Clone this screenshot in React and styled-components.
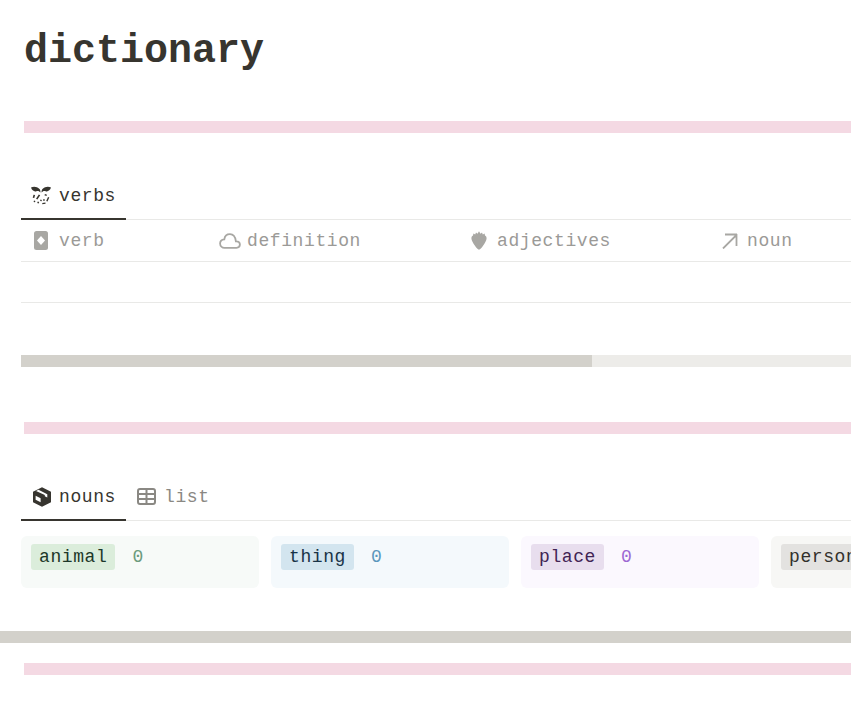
import React from "react";
import styled, { createGlobalStyle } from "styled-components";

const col_text = "#37352f";
const col_muted = "#9b9a97";
const col_icon = "#a8a7a3";
const col_line = "#e9e9e7";
const col_pink = "#f4d9e3";
const col_thumb = "#d3d1cb";
const col_track = "#edece9";

const GlobalStyle = createGlobalStyle`
  html, body {
    margin: 0;
    padding: 0;
    background: #fff;
    overflow: hidden;
  }
  body {
    font-family: "Liberation Mono", "DejaVu Sans Mono", monospace;
    color: ${col_text};
  }
`;

const Page = styled.div`
  width: 851px;
  height: 717px;
  overflow: hidden;
`;

const Title = styled.h1`
  margin: 0;
  padding: 29px 0 0 24px;
  height: 121px;
  box-sizing: border-box;
  font-size: 40px;
  line-height: 46px;
  font-weight: 700;
  white-space: nowrap;
`;

const Divider = styled.div`
  height: 12px;
  margin-left: 24px;
  background: ${col_pink};
`;

const Section = styled.section`
  padding: 42px 0 0 21px;
  height: ${(p) => p.$height}px;
  box-sizing: border-box;
`;

const Tabs = styled.div`
  display: flex;
  height: 45px;
  box-sizing: border-box;
  border-bottom: 1px solid ${col_line};
`;

const Tab = styled.div`
  display: flex;
  align-items: center;
  gap: ${(p) => p.$gap}px;
  height: 45px;
  box-sizing: border-box;
  padding: 0 0 2px ${(p) => p.$left}px;
  width: ${(p) => (p.$active ? "105px" : "auto")};
  border-bottom: 2px solid ${(p) => (p.$active ? col_text : "transparent")};
  color: ${(p) => (p.$active ? col_text : "#8a8883")};
  font-size: 18px;
  letter-spacing: 0.6px;
  white-space: nowrap;
`;

const HeaderRow = styled.div`
  display: grid;
  grid-template-columns: 188px 251px 251px 251px;
  height: 42px;
  box-sizing: border-box;
  border-bottom: 1px solid ${col_line};
`;

const HeaderCell = styled.div`
  display: flex;
  align-items: center;
  gap: ${(p) => p.$gap}px;
  padding-left: ${(p) => p.$left}px;
  color: ${col_muted};
  font-size: 18px;
  letter-spacing: 0.6px;
  white-space: nowrap;
`;

const EmptyRow = styled.div`
  height: 41px;
  box-sizing: border-box;
  border-bottom: 1px solid ${col_line};
`;

const ScrollTrack = styled.div`
  margin-top: 52px;
  height: 12px;
  background: ${col_track};
`;

const ScrollThumb = styled.div`
  width: 571px;
  height: 100%;
  background: ${col_thumb};
`;

const Board = styled.div`
  display: grid;
  grid-template-columns: repeat(4, 238px);
  gap: 12px;
  margin-top: 15px;
`;

const Card = styled.div`
  display: flex;
  align-items: flex-start;
  gap: 17px;
  height: 52px;
  box-sizing: border-box;
  padding: 8px 10px;
  border-radius: 6px;
  background: ${(p) => p.$bg};
`;

const Tag = styled.span`
  height: 26px;
  line-height: 26px;
  padding: 0 8px;
  border-radius: 3px;
  background: ${(p) => p.$bg};
  color: ${(p) => p.$color};
  font-size: 18px;
  letter-spacing: 0.6px;
  white-space: nowrap;
`;

const Count = styled.span`
  line-height: 26px;
  color: ${(p) => p.$color};
  font-size: 18px;
  letter-spacing: 0.6px;
`;

const PageScrollbar = styled.div`
  height: 12px;
  background: ${col_thumb};
`;

const LastDivider = styled(Divider)`
  margin-top: 20px;
`;

const Icon = styled.svg`
  flex: none;
  display: block;
`;

const FlutterIcon = () => (
  <Icon width="22" height="20" viewBox="0 0 22 20" fill={col_text}>
    <path d="M1 1.500c2.500-1.200 6-1 8.500 1.500.6.700.9 1.600 1 3.500-1.200-1.600-2.600-1.900-4.200-1.300C4.200 5.900 2 4.500 1 1.500z" />
    <path d="M21 1.500c-2.500-1.200-6-1-8.500 1.500-.6.700-.9 1.600-1 3.500 1.200-1.600 2.600-1.900 4.200-1.300C17.800 5.900 20 4.500 21 1.500z" />
    <path d="M8.800 8.500l1.400.8-2.800 4.200-1.400-.8zM3.500 8.800l1.600.3-.8 3-1.600-.3zM15 8l2 .8-.6 1.300-2-.8zM18 11l1.300.6-1.800 4-1.300-.6zM13.500 13l1.400.5-.5 1.400-1.400-.5zM10.500 13.500l1.400.4-.4 1.400-1.400-.4zM7.800 15.500l1.400.6-.6 1.400-1.400-.6zM4 14.500l1.400.4-.4 1.400-1.400-.4zM12.200 17l3.200-.6.2 1.300-3.200.6z" />
  </Icon>
);

const VerbIcon = () => (
  <Icon width="14" height="19" viewBox="0 0 14 19">
    <rect width="14" height="19" rx="2.500" fill={col_icon} />
    <path d="M7 5l4 4.500L7 14 3 9.500z" fill="#fff" />
  </Icon>
);

const CloudIcon = () => (
  <Icon width="22" height="16" viewBox="0 0 22 16" fill="none" stroke={col_icon} strokeWidth="1.800">
    <path d="M5.500 14.800h12c1.900 0 3.400-1.400 3.400-3.200 0-1.900-1.500-3.300-3.400-3.300h-.6C16.300 4 14 1.200 11 1.200 8 1.200 5.700 3.400 5.300 6.300 3 6.500 1.100 8.200 1.100 10.500c0 2.400 2 4.300 4.400 4.300z" />
  </Icon>
);

const StrawberryIcon = () => (
  <Icon width="16" height="19" viewBox="0 0 16 19" fill={col_icon}>
    <path d="M8 18.800c-1 0-2.600-1.900-4.200-4.200C2.200 12.300.4 9.500.4 7.300.4 6 1 5 2 4.500L2.400 2.400l1.800 1 .8-2 1.500 1.300L8 .2l1.500 2.500L11 1.400l.8 2 1.800-1L14 4.500c1 .5 1.600 1.500 1.600 2.800 0 2.200-1.800 5-3.400 7.300-1.600 2.300-3.200 4.200-4.200 4.200z" />
  </Icon>
);

const ArrowIcon = () => (
  <Icon width="16" height="16" viewBox="0 0 16 16" fill="none" stroke={col_icon} strokeWidth="1.800">
    <path d="M1 15.500L14.500 2M3 1.500h12M14.500 1v12" />
  </Icon>
);

const BoxIcon = () => (
  <Icon width="20" height="20" viewBox="0 0 20 20" fill={col_text}>
    <path d="M10 .3l9 4.500v10.400l-9 4.500-9-4.500V4.800z" />
    <path d="M6.500 2.800l8.800 4.400v3.300L12.800 9.300V8.100L4 3.900z" fill="#fff" />
    <path d="M3.600 8.800l5 2.500v4l-5-2.500z" fill="#fff" />
  </Icon>
);

const TableIcon = () => (
  <Icon width="19" height="17" viewBox="0 0 19 17" fill="none" stroke="#8a8883" strokeWidth="2">
    <rect x="1" y="1" width="17" height="15" rx="2" />
    <path d="M1 6h17M1 11h17M9.500 1v15" />
  </Icon>
);

const columns = [
  { label: "verb", icon: <VerbIcon />, left: 13, gap: 11 },
  { label: "definition", icon: <CloudIcon />, left: 10, gap: 6 },
  { label: "adjectives", icon: <StrawberryIcon />, left: 11, gap: 10 },
  { label: "noun", icon: <ArrowIcon />, left: 11, gap: 9 },
];

const groups = [
  { name: "animal", bg: "#f7faf8", tag: "#dbeddb", text: "#1c3829", count: "#6c9b7d" },
  { name: "thing", bg: "#f4f9fc", tag: "#d3e5ef", text: "#183347", count: "#5b97bd" },
  { name: "place", bg: "#fbf8fe", tag: "#e8deee", text: "#412454", count: "#9d68d3" },
  { name: "person", bg: "#f7f7f5", tag: "#e3e2e0", text: "#32302c", count: "#91918e" },
];

const App = () => (
  <Page>
    <GlobalStyle />
    <Title>dictionary</Title>
    <Divider />
    <Section $height={289}>
      <Tabs>
        <Tab $active $left={9} $gap={7}>
          <FlutterIcon />
          verbs
        </Tab>
      </Tabs>
      <HeaderRow>
        {columns.map((c) => (
          <HeaderCell key={c.label} $left={c.left} $gap={c.gap}>
            {c.icon}
            {c.label}
          </HeaderCell>
        ))}
      </HeaderRow>
      <EmptyRow />
      <ScrollTrack>
        <ScrollThumb />
      </ScrollTrack>
    </Section>
    <Divider />
    <Section $height={197}>
      <Tabs>
        <Tab $active $left={11} $gap={7}>
          <BoxIcon />
          nouns
        </Tab>
        <Tab $left={11} $gap={8}>
          <TableIcon />
          list
        </Tab>
      </Tabs>
      <Board>
        {groups.map((g) => (
          <Card key={g.name} $bg={g.bg}>
            <Tag $bg={g.tag} $color={g.text}>{g.name}</Tag>
            <Count $color={g.count}>0</Count>
          </Card>
        ))}
      </Board>
    </Section>
    <PageScrollbar />
    <LastDivider />
  </Page>
);

export default App;
